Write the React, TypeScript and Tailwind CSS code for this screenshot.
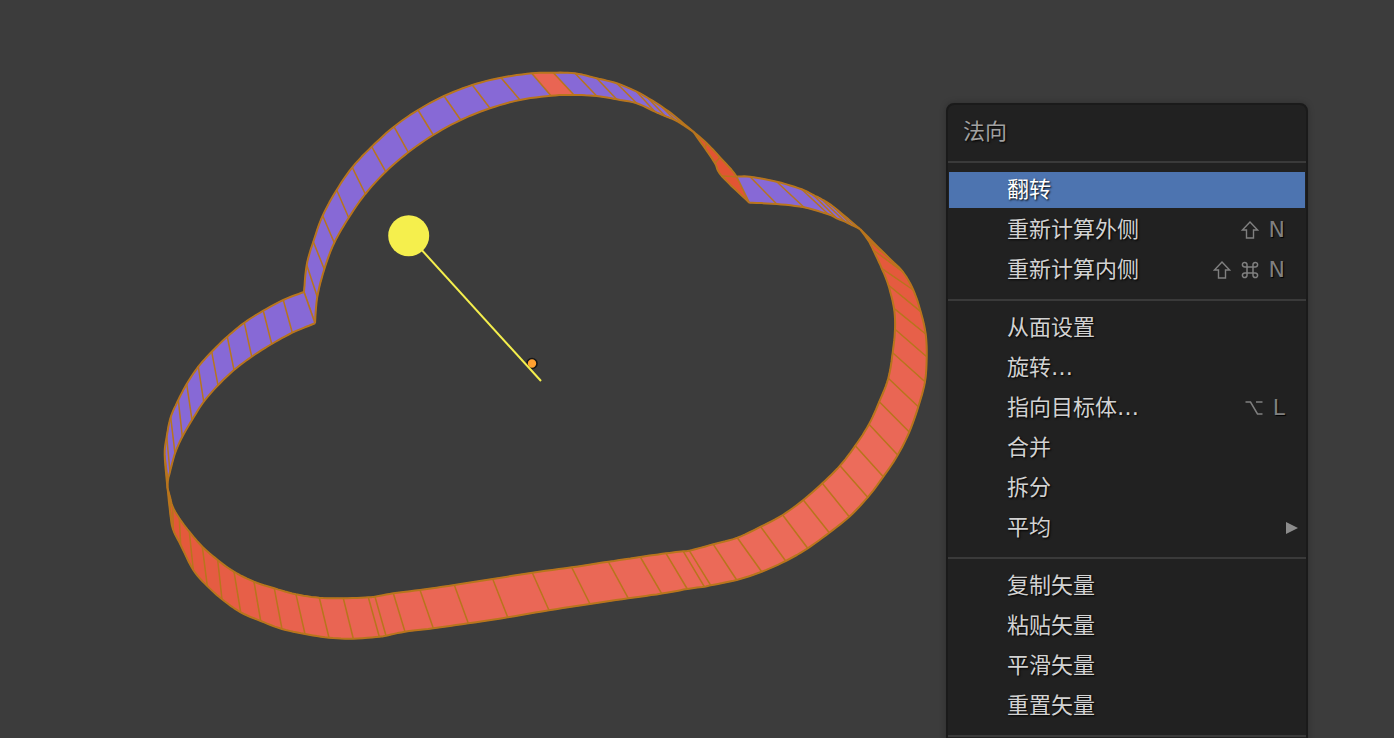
import React from 'react';

type Pt = [number, number];
type Pair = [Pt, Pt];

const PURPLE = '#8769d6';
const LINE = '#b8751c';

const cross = (x: number, y: number): Pair => [[x, y], [x, y]];

// band runs, each pair is [upper loop point, lower loop point]
const orangeLoop: Pair[] = [
  cross(167.5, 488),
  [[170, 497], [170.7, 517]],
  [[172.7, 506.7], [173.3, 530]],
  [[179.3, 518.3], [180.7, 545]],
  [[189.3, 531.7], [193.3, 570]],
  [[202.3, 546.7], [207.3, 586]],
  [[217.7, 560], [222, 599.3]],
  [[234, 571.7], [240.7, 612.3]],
  [[254, 581.7], [260.7, 621]],
  [[274.3, 588.3], [282, 629]],
  [[296, 594.3], [305, 634]],
  [[319.3, 597.7], [329, 637.7]],
  [[343.3, 598.3], [353.3, 638.7]],
  [[368.3, 597.3], [379.3, 636.7]],
  [[375, 596.7], [386, 635.7]],
  [[393.3, 593.3], [405, 631.7]],
  [[420, 590], [433.3, 628.3]],
  [[454.3, 585], [468.3, 623.3]],
  [[492.7, 579], [507.7, 617.3]],
  [[532.3, 572.7], [549, 610.3]],
  [[571.7, 567.3], [590, 604]],
  [[608.3, 561.7], [628.3, 598.3]],
  [[640.3, 557], [661.7, 593.6]],
  [[666, 553.3], [687.3, 589]],
  [[683.3, 551.3], [704.3, 586.7]],
  [[689.3, 550.7], [710.7, 585.3]],
  [[713.3, 544.3], [736.7, 580]],
  [[737.3, 537.7], [761.7, 571.7]],
  [[760.7, 526.7], [785.7, 561]],
  [[782.7, 515], [807.7, 548.3]],
  [[803.3, 500], [829.3, 532.7]],
  [[822.3, 483.3], [849.3, 516.7]],
  [[840, 465.7], [867.7, 497.3]],
  [[855.3, 445.7], [883.3, 476.7]],
  [[869, 424.3], [897.7, 455]],
  [[879.3, 401.7], [909.3, 432]],
  [[888.3, 378.3], [918.3, 406.7]],
  [[892.7, 352.7], [925, 381.7]],
  [[895, 329.3], [926.7, 356.7]],
  [[894, 308.3], [925.7, 334]],
  [[888.3, 285], [920.7, 311.7]],
  [[881.7, 268.3], [913.3, 290]],
  [[873.3, 250], [902.7, 271.7]],
  [[868, 240], [888, 257]],
  cross(860, 229),
];

const rightPurple: Pair[] = [
  cross(860, 229),
  [[833.3, 206.7], [851.7, 225]],
  [[821.7, 199.3], [845, 221.7]],
  [[813.3, 195], [836.7, 218.3]],
  [[801.7, 189.3], [828.3, 214.3]],
  [[776.7, 181.7], [804, 207.3]],
  [[750, 176.7], [776.7, 204]],
  [[736.7, 176.7], [749.3, 202.7]],
];

const notchOrange: Pair[] = [
  cross(693.3, 131.7),
  [[705, 148.3], [706.7, 143.3]],
  [[715, 163.3], [720, 157.3]],
  [[721.7, 176], [736.7, 176.7]],
  cross(749.3, 202.7),
];

// cross at the dent in the top, round the big lobe to the left notch
const topArc: Pair[] = [
  cross(693.3, 131.7),
  [[673.3, 115], [683.3, 125]],
  [[661.7, 106.7], [675, 120]],
  [[648, 98], [665, 116]],
  [[636.7, 91.7], [655, 111.7]],
  [[616.7, 83.3], [636.7, 103.3]],
  [[596.7, 78.3], [616.7, 99.3]],
  [[575, 73.3], [596.7, 96]],
  [[553.3, 72.7], [574, 95]],
  [[531.7, 73.3], [551, 95.7]],
  [[501, 77.7], [520, 100]],
  [[472.3, 85], [490, 108.3]],
  [[444, 96], [460.7, 120]],
  [[418, 110], [433.3, 135]],
  [[394, 126.7], [408.3, 152.3]],
  [[371.7, 146.7], [385.7, 171.7]],
  [[352.3, 167.3], [365.3, 194]],
  [[336.7, 190], [348.7, 217.7]],
  [[322.7, 215.7], [334.3, 242.7]],
  [[313.3, 241.7], [324.3, 269.3]],
  [[306.7, 265], [317.3, 296.7]],
  [[304, 292], [315, 323.3]],
];

const leftArc: Pair[] = [
  [[304, 292], [315, 323.3]],
  [[283.3, 300], [292.3, 332.7]],
  [[263.3, 310.7], [271.7, 344]],
  [[244.3, 322.7], [251.7, 356.7]],
  [[227.3, 336.7], [234, 370]],
  [[211.7, 351.7], [218, 385.3]],
  [[198.3, 366.7], [203.7, 401.7]],
  [[186.7, 384], [192, 420]],
  [[178.3, 400], [182.3, 436.7]],
  [[170.7, 417.3], [175, 453.3]],
  [[166.7, 436.7], [170, 471.7]],
  [[164.7, 455], [168, 480]],
  cross(167.5, 488),
];

const mix = (a: string, b: string, t: number) => {
  const n = (s: string, i: number) => parseInt(s.slice(1 + i * 2, 3 + i * 2), 16);
  const c = [0, 1, 2].map((i) => Math.round(n(a, i) + (n(b, i) - n(a, i)) * t));
  return `rgb(${c[0]},${c[1]},${c[2]})`;
};

const orangeAt = (t: number) => {
  if (t < 0.25) return mix('#e25433', '#e96553', t / 0.25);
  if (t < 0.75) return mix('#e96553', '#ec6c5b', (t - 0.25) / 0.5);
  if (t < 0.85) return mix('#ec6c5b', '#e86350', (t - 0.75) / 0.1);
  return mix('#e86350', '#e25433', (t - 0.85) / 0.15);
};

// catmull-rom points between line[i] and line[i + 1]
const smooth = (line: Pt[], i: number) => {
  const p0 = line[Math.max(i - 1, 0)];
  const p1 = line[i];
  const p2 = line[i + 1];
  const p3 = line[Math.min(i + 2, line.length - 1)];
  const out: Pt[] = [];
  for (let s = 0; s <= 6; s++) {
    const t = s / 6;
    const f = (k: 0 | 1) =>
      0.5 *
      (2 * p1[k] +
        (p2[k] - p0[k]) * t +
        (2 * p0[k] - 5 * p1[k] + 4 * p2[k] - p3[k]) * t * t +
        (3 * p1[k] - p0[k] - 3 * p2[k] + p3[k]) * t * t * t);
    out.push([f(0), f(1)]);
  }
  return out;
};

const str = (pts: Pt[]) => pts.map((v) => `${v[0].toFixed(1)},${v[1].toFixed(1)}`).join(' ');

function Run({ pairs, fillAt }: { pairs: Pair[]; fillAt: (t: number, i: number) => string }) {
  const upper = pairs.map((p) => p[0]);
  const lower = pairs.map((p) => p[1]);
  const quads = pairs.slice(1).map((_, i) => ({ up: smooth(upper, i), low: smooth(lower, i) }));
  return (
    <g>
      {quads.map((q, i) => {
        const fill = fillAt(i / Math.max(quads.length - 1, 1), i);
        return <polygon key={i} points={str([...q.up, ...[...q.low].reverse()])} fill={fill} stroke={fill} strokeWidth={0.6} />;
      })}
      {pairs.map((p, i) => (
        <line key={i} x1={p[0][0]} y1={p[0][1]} x2={p[1][0]} y2={p[1][1]} stroke={LINE} strokeWidth={1.5} />
      ))}
      <polyline points={str(quads.flatMap((q) => q.up))} fill="none" stroke={LINE} strokeWidth={2} strokeLinejoin="round" />
      <polyline points={str(quads.flatMap((q) => q.low))} fill="none" stroke={LINE} strokeWidth={2} strokeLinejoin="round" />
    </g>
  );
}

function CloudBand() {
  return (
    <svg className="absolute inset-0" width={1394} height={738} viewBox="0 0 1394 738">
      <Run pairs={orangeLoop} fillAt={orangeAt} />
      <Run pairs={notchOrange} fillAt={() => '#e25433'} />
      <Run pairs={rightPurple} fillAt={() => PURPLE} />
      <Run pairs={topArc} fillAt={(_, i) => (i === 8 ? '#e96553' : PURPLE)} />
      <Run pairs={leftArc} fillAt={() => PURPLE} />
      <circle cx={532} cy={363.5} r={5} fill="#ffa030" stroke="#161616" strokeWidth={1.6} />
      <line x1={408.7} y1={235.7} x2={541} y2={381} stroke="#f5ef4d" strokeWidth={2} />
      <circle cx={408.7} cy={235.7} r={20.5} fill="#f5ef4d" />
    </svg>
  );
}

function ShiftKey() {
  return (
    <svg width={18} height={18} viewBox="0 0 18 18" fill="none" stroke="currentColor" strokeWidth={1.4} strokeLinejoin="miter">
      <path d="M9 1 16.6 9H12.5V17H5.5V9H1.4Z" />
    </svg>
  );
}

function CmdKey() {
  return (
    <svg width={18} height={18} viewBox="0 0 18 18" fill="none" stroke="currentColor" strokeWidth={1.5}>
      <path d="M6 6H12V12H6ZM6 6H3.8A2.3 2.3 0 1 1 6 3.8ZM12 6V3.8A2.3 2.3 0 1 1 14.2 6ZM12 12H14.2A2.3 2.3 0 1 1 12 14.2ZM6 12V14.2A2.3 2.3 0 1 1 3.8 12Z" />
    </svg>
  );
}

function OptKey() {
  return (
    <svg width={18} height={18} viewBox="0 0 18 18" fill="none" stroke="currentColor" strokeWidth={1.5}>
      <path d="M0.5 3H5.5L12.5 15H17.5M11 3H17.5" />
    </svg>
  );
}

function Row({ label, keys, active, arrow }: { label: string; keys?: React.ReactNode; active?: boolean; arrow?: boolean }) {
  return (
    <div className="h-10 pt-[3px]">
      <div
        className={`mx-px h-9 pl-[58px] pr-[20px] flex items-center justify-between ${
          active ? 'bg-[#4d74b0] text-white' : 'text-[#d2d2d2]'
        }`}
      >
        <span className="-mt-[1px] [text-shadow:1px_1px_2px_#000000]">{label}</span>
        {keys && (
          <span className="-mt-[1px] flex items-center gap-[10px] text-[#808080] [text-shadow:1px_1px_1px_#000000]">{keys}</span>
        )}
        {arrow && <span className="-mr-[13px] w-0 h-0 border-y-[6px] border-y-transparent border-l-[12px] border-l-[#8c8c8c]" />}
      </div>
    </div>
  );
}

function Group({ children }: { children: React.ReactNode }) {
  return <div className="pt-[6px] pb-[10px] border-t-2 border-[#3a3a3a]">{children}</div>;
}

export default function App() {
  return (
    <div className="relative w-[1394px] h-[738px] overflow-hidden bg-[#3c3c3c] font-['DejaVu_Sans','Noto_Sans_CJK_SC',sans-serif] text-[22px] leading-none">
      <CloudBand />
      <div className="absolute left-[946px] top-[103px] w-[362px] border-2 border-[#1a1a1a] rounded-lg bg-[#212121] shadow-[0_0_6px_rgba(0,0,0,0.25)]">
        <div className="h-[56px] pl-[15px] pb-[2px] flex items-center text-[#a0a0a0] [text-shadow:1px_1px_2px_#000000]">法向</div>
        <Group>
          <Row label="翻转" active />
          <Row label="重新计算外侧" keys={<><ShiftKey /><span>N</span></>} />
          <Row label="重新计算内侧" keys={<><ShiftKey /><CmdKey /><span>N</span></>} />
        </Group>
        <Group>
          <Row label="从面设置" />
          <Row label="旋转…" />
          <Row label="指向目标体…" keys={<><OptKey /><span>L</span></>} />
          <Row label="合并" />
          <Row label="拆分" />
          <Row label="平均" arrow />
        </Group>
        <Group>
          <Row label="复制矢量" />
          <Row label="粘贴矢量" />
          <Row label="平滑矢量" />
          <Row label="重置矢量" />
        </Group>
        <div className="h-16 border-t-2 border-[#3a3a3a]" />
      </div>
    </div>
  );
}
